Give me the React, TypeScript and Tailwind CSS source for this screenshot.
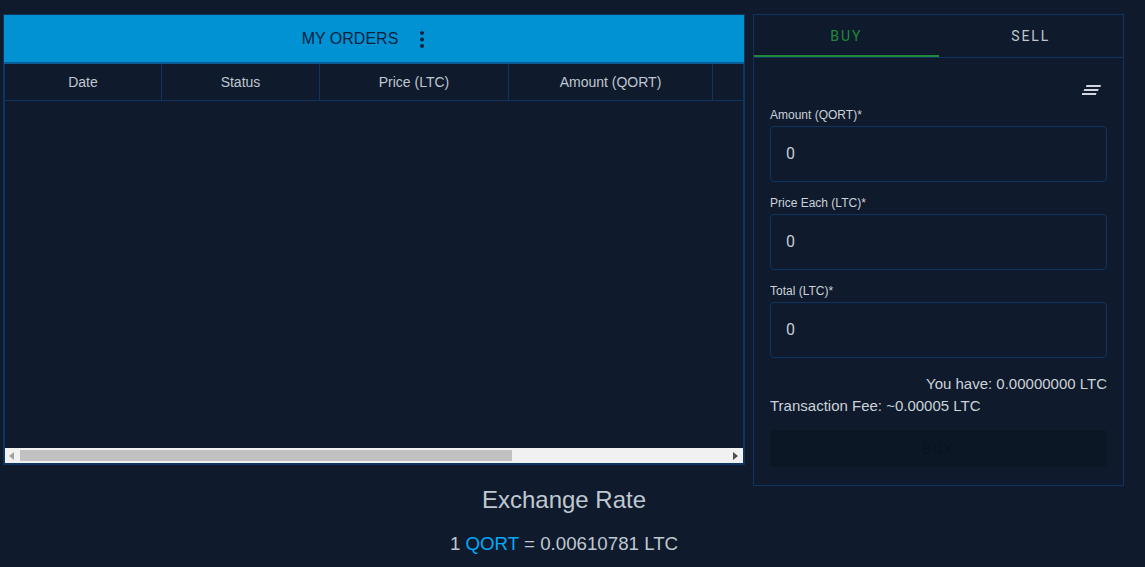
const sans = 'font-["Liberation_Sans",Arial,sans-serif]';

const columns = [
  { label: 'Date', width: 'w-[157px]' },
  { label: 'Status', width: 'w-[158px]' },
  { label: 'Price (LTC)', width: 'w-[189px]' },
  { label: 'Amount (QORT)', width: 'w-[204px]' },
];

const fields = ['Amount (QORT)*', 'Price Each (LTC)*', 'Total (LTC)*'];

function Field({ label }: { label: string }) {
  return (
    <div className="h-[88px]">
      <label className="block h-[18px] -translate-y-[2px] text-xs leading-[18px] text-[#cbd2d9]">{label}</label>
      <div className="flex h-[56px] items-center rounded border border-[#0e3460] pl-[15px] font-['Roboto',sans-serif] text-base text-[#c4ccd4]">
        0
      </div>
    </div>
  );
}

function OrdersPanel() {
  return (
    <div className="flex h-[451px] w-[742px] flex-col border border-[#0e3460]">
      <div className="flex h-[49px] items-center justify-center border-b-2 border-[#0b5f96] bg-[#0092d3] pr-[12px] pt-px text-base text-[#0c2340]">
        <span>MY ORDERS</span>
        <svg className="ml-[12px]" width="24" height="24" viewBox="0 0 24 24" fill="currentColor">
          <circle cx="12" cy="6" r="2" />
          <circle cx="12" cy="12.5" r="2" />
          <circle cx="12" cy="19" r="2" />
        </svg>
      </div>
      <div className="flex flex-1 flex-col border-x border-b border-[#0e3460]">
        <div className="flex h-[37px] border-b border-[#0e3460] text-sm text-[#bfc8d1]">
          {columns.map((col) => (
            <div key={col.label} className={`flex items-center justify-center border-r border-[#0e3460] ${col.width}`}>
              {col.label}
            </div>
          ))}
        </div>
        <div className="flex-1" />
        <div className="flex h-[15px] items-center bg-[#f1f1f1]">
          <svg className="ml-[4px]" width="5" height="8" viewBox="0 0 5 8" fill="#a3a3a3">
            <path d="M5 0v8L0 4z" />
          </svg>
          <div className="ml-[6px] h-[11px] w-[492px] bg-[#c1c1c1]" />
          <div className="flex-1" />
          <svg className="mr-[5px]" width="5" height="8" viewBox="0 0 5 8" fill="#505050">
            <path d="M0 0v8l5-4z" />
          </svg>
        </div>
      </div>
    </div>
  );
}

function TradePanel() {
  return (
    <div className="ml-[8px] h-[472px] w-[371px] border border-[#0e3460]">
      <div className="flex h-[43px] border-b border-[#0e3460] font-['Roboto',sans-serif] text-sm tracking-[1.9px]">
        <div className="flex w-1/2 items-center justify-center border-b-2 border-[#1f8a3a] pt-[1px] text-[#1f8a3a]">BUY</div>
        <div className="flex w-1/2 items-center justify-center pb-[1px] text-[#bfc8d1]">SELL</div>
      </div>
      <div className="px-4">
        <div className="flex h-[50px] items-end justify-end pr-[6px] pb-[12px]">
          <svg width="19" height="11" viewBox="0 0 19 11" fill="#d0d6dc">
            <path d="M4.5 0H19l-.6 2H3.9zM2.2 4h14.5l-.6 2H1.6zM0 8h14.5l-.6 2H-.6z" />
          </svg>
        </div>
        {fields.map((label) => (
          <Field key={label} label={label} />
        ))}
        <div className="mt-[1px] text-right text-[15px] leading-[22px] text-[#cbd2d9]">You have: 0.00000000 LTC</div>
        <div className="text-[15px] leading-[22px] text-[#cbd2d9]">Transaction Fee: ~0.00005 LTC</div>
        <div className="mt-[13px] flex h-[37px] items-center justify-center rounded bg-[#0c1725] font-['Roboto',sans-serif] text-sm tracking-[1.9px] text-[#0a121d]">
          BUY
        </div>
      </div>
    </div>
  );
}

export default function App() {
  return (
    <div className={`h-[567px] overflow-hidden bg-[#0f1a2c] ${sans}`}>
      <div className="flex pl-[3px] pt-[14px]">
        <OrdersPanel />
        <TradePanel />
      </div>
      <div className="w-[1128px] text-center text-[#bfc8d1]">
        <h2 className="text-2xl leading-[28px]">Exchange Rate</h2>
        <p className="mt-[17px] text-[18.72px] leading-[26px]">
          1 <span className="text-[#03a9f4]">QORT</span> = 0.00610781 LTC
        </p>
      </div>
    </div>
  );
}
